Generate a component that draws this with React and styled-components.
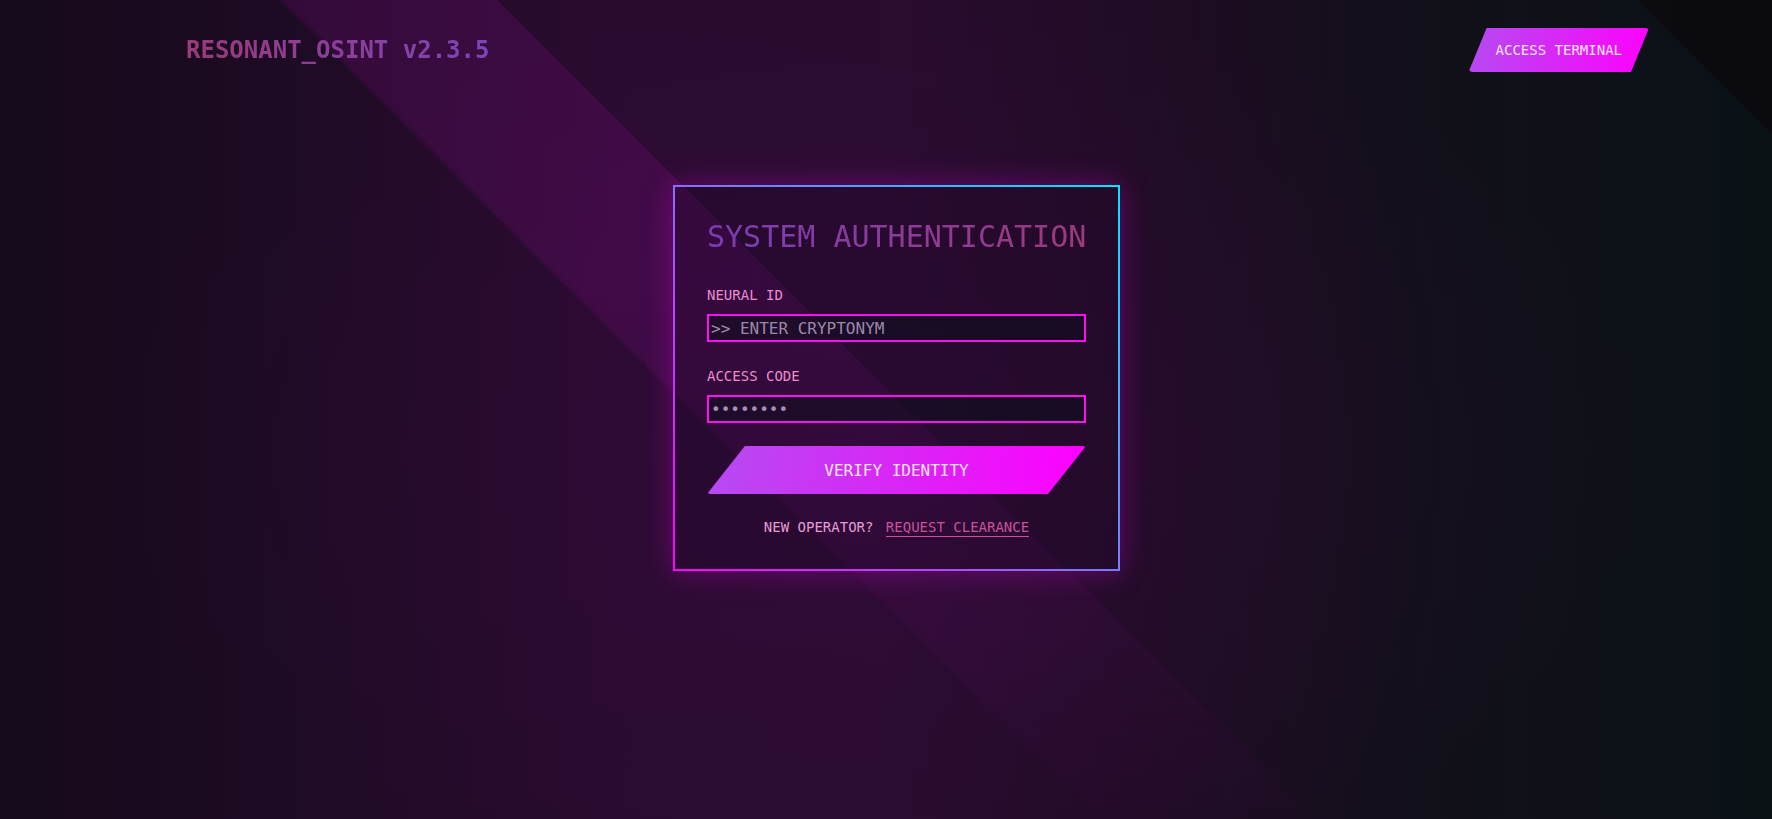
import React from "react";
import styled, { createGlobalStyle } from "styled-components";

const GlobalStyle = createGlobalStyle`
  html, body {
    margin: 0;
    padding: 0;
    background: #140a1a;
  }
  * { box-sizing: border-box; }
`;

const mono = `"DejaVu Sans Mono", "Liberation Mono", monospace`;

const Page = styled.div`
  position: relative;
  width: 100%;
  min-height: 100vh;
  font-family: ${mono};
  overflow: hidden;
  background:
    linear-gradient(
      45deg,
      transparent 94.8%,
      rgba(11, 9, 13, 0.8) 94.8%
    ),
    radial-gradient(ellipse 45% 55% at 50% 55%, rgba(70, 10, 80, 0.22), transparent 100%),
    linear-gradient(
      90deg,
      #140a1a 0%,
      #1d0b23 15%,
      #2a0b30 35%,
      #2a0c30 50%,
      #200c25 64%,
      #12101a 80%,
      #0a1216 100%
    );
  display: flex;
  flex-direction: column;

  &::before {
    content: "";
    position: absolute;
    inset: 0;
    pointer-events: none;
    background: linear-gradient(
      45deg,
      transparent 42.3%,
      rgba(230, 20, 235, 0.11) 42.6%,
      rgba(230, 20, 235, 0.11) 50.8%,
      transparent 50.8%
    );
    -webkit-mask-image: linear-gradient(
      to bottom,
      #000 0%,
      #000 35%,
      rgba(0, 0, 0, 0.5) 62%,
      rgba(0, 0, 0, 0.12) 100%
    );
    mask-image: linear-gradient(
      to bottom,
      #000 0%,
      #000 35%,
      rgba(0, 0, 0, 0.5) 62%,
      rgba(0, 0, 0, 0.12) 100%
    );
  }
`;

const Header = styled.header`
  position: relative;
  display: flex;
  justify-content: space-between;
  align-items: center;
  padding: 28px 123px 0 186px;
`;

const Logo = styled.div`
  font-size: 24px;
  font-weight: 700;
  background: linear-gradient(90deg, #9a3a78 0%, #7a46bc 100%);
  -webkit-background-clip: text;
  background-clip: text;
  color: transparent;
`;

const SlantButton = styled.button`
  border: none;
  cursor: pointer;
  font-family: ${mono};
  color: #ffe6fc;
  background: linear-gradient(100deg, #b54cf2 0%, #d52af5 45%, #ff00ff 100%);
  clip-path: polygon(10% 0, 100% 0, 90% 100%, 0 100%);
  border-radius: 4px;
  display: flex;
  align-items: center;
  justify-content: center;
  font-size: ${(p) => p.$size}px;
  height: ${(p) => p.$height}px;
  width: ${(p) => (p.$full ? "100%" : "auto")};
  padding: 0 ${(p) => p.$padX}px;
`;

const Main = styled.main`
  position: relative;
  display: flex;
  justify-content: center;
  padding-left: 21px;
  margin-top: 113px;
`;

const Card = styled.section`
  width: 447px;
  padding: 32px;
  border: 2px solid transparent;
  border-image: linear-gradient(45deg, #ff00ff 0%, #00e8ff 100%) 1;
  background: rgba(30, 8, 40, 0.3);
  box-shadow: 0 0 28px rgba(255, 0, 255, 0.3);
  display: flex;
  flex-direction: column;
`;

const Title = styled.h1`
  margin: 0 0 33px;
  font-size: 30px;
  font-weight: 400;
  line-height: normal;
  white-space: nowrap;
  background: linear-gradient(90deg, #7a3db6 0%, #9e3a7a 100%);
  -webkit-background-clip: text;
  background-clip: text;
  color: transparent;
`;

const Field = styled.div`
  display: flex;
  flex-direction: column;
  gap: 11px;
  margin-bottom: ${(p) => p.$space}px;
`;

const Label = styled.label`
  font-size: 14px;
  line-height: normal;
  color: #e98ccf;
`;

const Input = styled.input`
  font-family: ${mono};
  font-size: 16px;
  height: 28px;
  padding: 0 2px;
  border: 2px solid #ff10f0;
  background: rgba(12, 14, 30, 0.55);
  color: #a98cba;
  outline: none;
  &::placeholder {
    color: #9c88ab;
  }
`;

const Footer = styled.p`
  margin: 25px 0 0;
  text-align: center;
  font-size: 14px;
  line-height: normal;
  color: #e69cd4;
`;

const Link = styled.a`
  display: inline-block;
  margin-left: 4px;
  color: #c8529b;
  text-decoration: none;
  padding-bottom: 1px;
  border-bottom: 1px solid #c8529b;
  line-height: normal;
`;

export default function App() {
  return (
    <>
      <GlobalStyle />
      <Page>
        <Header>
          <Logo>RESONANT_OSINT v2.3.5</Logo>
          <SlantButton $size={14} $height={44} $padX={27}>
            ACCESS TERMINAL
          </SlantButton>
        </Header>
        <Main>
          <Card>
            <Title>SYSTEM AUTHENTICATION</Title>
            <Field $space={26}>
              <Label htmlFor="nid">NEURAL ID</Label>
              <Input id="nid" type="text" placeholder=">> ENTER CRYPTONYM" />
            </Field>
            <Field $space={23}>
              <Label htmlFor="code">ACCESS CODE</Label>
              <Input id="code" type="password" defaultValue="password" />
            </Field>
            <SlantButton $size={16} $height={48} $padX={0} $full>
              VERIFY IDENTITY
            </SlantButton>
            <Footer>
              NEW OPERATOR? <Link href="#">REQUEST CLEARANCE</Link>
            </Footer>
          </Card>
        </Main>
      </Page>
    </>
  );
}
